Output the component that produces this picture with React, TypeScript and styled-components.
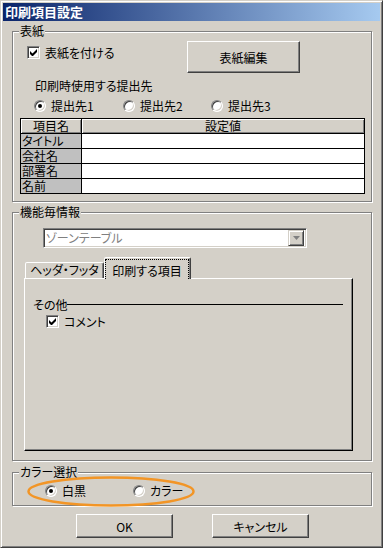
import React from 'react';
import styled, { createGlobalStyle } from 'styled-components';

const FACE = '#d4d0c8';
const SHADOW = '#808080';
const DARK = '#404040';

const GlobalStyle = createGlobalStyle`
  html, body { margin: 0; padding: 0; background: ${FACE}; }
  body {
    font-family: "Noto Sans CJK JP", "DejaVu Sans", sans-serif;
    font-size: 12px;
    font-feature-settings: "palt";
    color: #000;
  }
  * { box-sizing: border-box; }
`;

const Window = styled.div`
  width: 383px;
  height: 548px;
  background: ${FACE};
  border: 1px solid;
  border-color: ${FACE} ${DARK} ${DARK} ${FACE};
  box-shadow: inset 1px 1px #fff, inset -1px -1px ${SHADOW};
  padding: 2px;
  display: flex;
  flex-direction: column;
`;

const TitleBar = styled.div`
  height: 18px;
  line-height: 18px;
  padding-left: 2px;
  background: linear-gradient(to right, #0a246a, #a6caf0);
  color: #fff;
  font-weight: bold;
  font-size: 13px;
  font-feature-settings: normal;
`;

const Client = styled.div`
  display: flex;
  flex-direction: column;
  padding: 10px 8px 0 9px;
`;

const Group = styled.div<{ $h: number; $top: number }>`
  position: relative;
  height: ${({ $h }) => $h}px;
  margin-top: ${({ $top }) => $top}px;
  border: 1px solid ${SHADOW};
  box-shadow: inset 1px 1px #fff, 1px 1px #fff;
  display: flex;
  flex-direction: column;
`;

const Legend = styled.span`
  position: absolute;
  top: -8px;
  left: 6px;
  padding: 0 1px;
  line-height: 14px;
  background: ${FACE};
`;

const TopRow = styled.div`
  display: flex;
  align-items: flex-start;
  margin-top: 9px;
  padding-left: 14px;
`;

const CheckItem = styled.label<{ $w?: number }>`
  display: flex;
  align-items: center;
  gap: 5px;
  height: 13px;
  line-height: 13px;
  white-space: nowrap;
  width: ${({ $w }) => ($w ? `${$w}px` : 'auto')};
  margin-top: ${({ $w }) => ($w ? 5 : 0)}px;
`;

const CheckBox = styled.span`
  width: 13px;
  height: 13px;
  flex: none;
  background: #fff;
  border: 1px solid;
  border-color: ${SHADOW} #fff #fff ${SHADOW};
  box-shadow: inset 1px 1px ${DARK}, inset -1px -1px ${FACE};
  display: flex;
  align-items: center;
  justify-content: center;
`;

const Button = styled.div<{ $w: number; $h: number }>`
  width: ${({ $w }) => $w}px;
  height: ${({ $h }) => $h}px;
  flex: none;
  display: flex;
  align-items: center;
  justify-content: center;
  background: ${FACE};
  border: 1px solid;
  border-color: #fff ${DARK} ${DARK} #fff;
  box-shadow: inset -1px -1px ${SHADOW};
`;

const SubLabel = styled.div`
  margin-top: 6px;
  padding-left: 22px;
  line-height: 14px;
`;

const RadioRow = styled.div<{ $top: number; $left: number }>`
  display: flex;
  align-items: center;
  height: 12px;
  margin-top: ${({ $top }) => $top}px;
  padding-left: ${({ $left }) => $left}px;
`;

const RadioItem = styled.label<{ $w: number }>`
  display: flex;
  align-items: center;
  gap: 5px;
  width: ${({ $w }) => $w}px;
  line-height: 12px;
  white-space: nowrap;
`;

const Radio = styled.span<{ $on?: boolean }>`
  position: relative;
  width: 12px;
  height: 12px;
  flex: none;
  border-radius: 50%;
  background: #fff;
  border: 1px solid;
  border-color: ${SHADOW} #fff #fff ${SHADOW};
  box-shadow: inset 1px 1px ${DARK}, inset -1px -1px ${FACE};
  &::after {
    content: '';
    display: ${({ $on }) => ($on ? 'block' : 'none')};
    position: absolute;
    left: 3px;
    top: 3px;
    width: 4px;
    height: 4px;
    border-radius: 50%;
    background: #000;
  }
`;

const Table = styled.div`
  margin: 6px 0 0 7px;
  width: 345px;
  display: grid;
  grid-template-columns: 60px 1fr;
  grid-template-rows: repeat(5, 14px);
  gap: 1px;
  padding: 1px;
  background: #000;
`;

const HeadCell = styled.div`
  background: ${FACE};
  box-shadow: inset 1px 1px #fff, inset -1px -1px ${SHADOW};
  text-align: center;
  line-height: 14px;
`;

const NameCell = styled.div`
  background: #c0c0c0;
  line-height: 14px;
  padding-left: 1px;
`;

const ValueCell = styled.div`
  background: #fff;
`;

const Combo = styled.div`
  margin: 15px 0 0 30px;
  width: 264px;
  height: 20px;
  display: flex;
  align-items: center;
  background: #fff;
  border: 1px solid;
  border-color: ${SHADOW} #fff #fff ${SHADOW};
  box-shadow: inset 1px 1px ${DARK}, inset -1px -1px ${FACE};
  padding: 2px;
  color: ${SHADOW};
  line-height: 14px;
`;

const ComboText = styled.span`
  flex: 1;
`;

const ComboButton = styled.span`
  width: 16px;
  height: 16px;
  display: flex;
  align-items: center;
  justify-content: center;
  background: ${FACE};
  border: 1px solid;
  border-color: ${FACE} ${DARK} ${DARK} ${FACE};
  box-shadow: inset 1px 1px #fff, inset -1px -1px ${SHADOW};
`;

const TabArea = styled.div`
  margin: 9px 0 0 11px;
  width: 329px;
  display: flex;
  flex-direction: column;
`;

const TabStrip = styled.div`
  display: flex;
  align-items: flex-end;
  height: 21px;
  padding-left: 1px;
`;

const Tab = styled.div<{ $w: number; $active?: boolean }>`
  position: relative;
  z-index: ${({ $active }) => ($active ? 1 : 0)};
  width: ${({ $w }) => $w}px;
  height: ${({ $active }) => ($active ? 22 : 16)}px;
  margin-bottom: ${({ $active }) => ($active ? -1 : 0)}px;
  background: ${FACE};
  border: 1px solid;
  border-bottom: none;
  border-color: #fff ${DARK} transparent #fff;
  border-radius: 2px 2px 0 0;
  box-shadow: inset -1px 0 ${SHADOW};
  display: flex;
  justify-content: center;
  line-height: 14px;
  white-space: nowrap;
`;

const FocusBox = styled.div`
  flex: 1;
  margin: 1px 1px 0 0;
  border: 1px dotted #000;
  border-bottom: none;
  display: flex;
  justify-content: center;
  padding-top: 4px;
`;

const TabPanel = styled.div`
  height: 173px;
  border: 1px solid;
  border-color: #fff #000 #000 #fff;
  box-shadow: inset -1px -1px ${SHADOW};
  display: flex;
  flex-direction: column;
`;

const SectionHead = styled.div`
  display: flex;
  align-items: center;
  margin: 19px 9px 0 8px;
  line-height: 14px;
`;

const SectionLine = styled.span`
  flex: 1;
  height: 1px;
  background: #000;
  margin-top: -1px;
`;

const PanelCheck = styled.div`
  margin-top: 3px;
  padding-left: 21px;
`;

const Ellipse = styled.svg`
  position: absolute;
  left: 14px;
  top: 3px;
`;

const ButtonRow = styled.div`
  display: flex;
  gap: 39px;
  margin: 8px 0 0 64px;
`;

const Check = () => (
  <svg width="7" height="7" viewBox="0 0 7 7">
    <path d="M0 2v3l2 2h1l4-4V0L2.5 4.5z" fill="#000" />
  </svg>
);

const rows = ['タイトル', '会社名', '部署名', '名前'];

export default function App() {
  return (
    <>
      <GlobalStyle />
      <Window>
        <TitleBar>印刷項目設定</TitleBar>
        <Client>
          <Group $h={171} $top={0}>
            <Legend>表紙</Legend>
            <TopRow>
              <CheckItem $w={160}>
                <CheckBox>
                  <Check />
                </CheckBox>
                表紙を付ける
              </CheckItem>
              <Button $w={113} $h={32}>表紙編集</Button>
            </TopRow>
            <SubLabel>印刷時使用する提出先</SubLabel>
            <RadioRow $top={7} $left={21}>
              <RadioItem $w={89}>
                <Radio $on />
                提出先1
              </RadioItem>
              <RadioItem $w={88}>
                <Radio />
                提出先2
              </RadioItem>
              <RadioItem $w={88}>
                <Radio />
                提出先3
              </RadioItem>
            </RadioRow>
            <Table>
              <HeadCell>項目名</HeadCell>
              <HeadCell>設定値</HeadCell>
              {rows.map((r) => (
                <React.Fragment key={r}>
                  <NameCell>{r}</NameCell>
                  <ValueCell />
                </React.Fragment>
              ))}
            </Table>
          </Group>

          <Group $h={249} $top={10}>
            <Legend>機能毎情報</Legend>
            <Combo>
              <ComboText>ゾーンテーブル</ComboText>
              <ComboButton>
                <svg width="7" height="4" viewBox="0 0 7 4">
                  <path d="M0 0h7L3.5 4z" fill={SHADOW} />
                </svg>
              </ComboButton>
            </Combo>
            <TabArea>
              <TabStrip>
                <Tab $w={79}>ヘッダ・フッタ</Tab>
                <Tab $w={87} $active>
                  <FocusBox>印刷する項目</FocusBox>
                </Tab>
              </TabStrip>
              <TabPanel>
                <SectionHead>
                  その他
                  <SectionLine />
                </SectionHead>
                <PanelCheck>
                  <CheckItem>
                    <CheckBox>
                      <Check />
                    </CheckBox>
                    コメント
                  </CheckItem>
                </PanelCheck>
              </TabPanel>
            </TabArea>
          </Group>

          <Group $h={34} $top={11}>
            <Legend>カラー選択</Legend>
            <RadioRow $top={12} $left={32}>
              <RadioItem $w={88}>
                <Radio $on />
                白黒
              </RadioItem>
              <RadioItem $w={88}>
                <Radio />
                カラー
              </RadioItem>
            </RadioRow>
            <Ellipse width="168" height="31" viewBox="0 0 168 31">
              <ellipse cx="84" cy="15.5" rx="82.5" ry="14" fill="none" stroke="#f29526" strokeWidth="2.5" />
            </Ellipse>
          </Group>

          <ButtonRow>
            <Button $w={97} $h={24}>OK</Button>
            <Button $w={97} $h={24}>キャンセル</Button>
          </ButtonRow>
        </Client>
      </Window>
    </>
  );
}
